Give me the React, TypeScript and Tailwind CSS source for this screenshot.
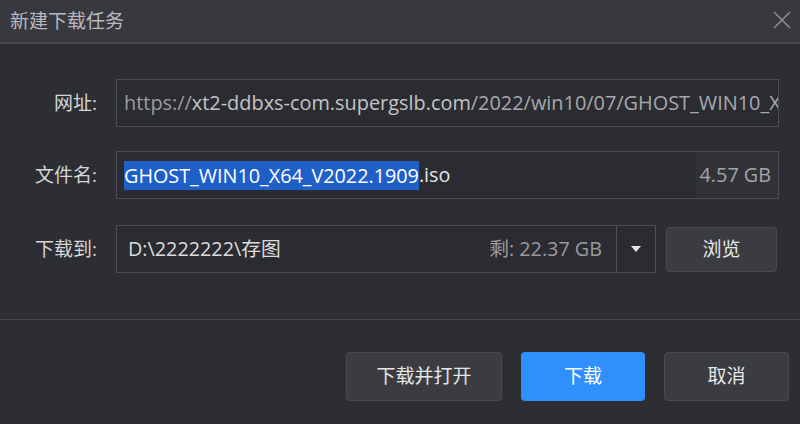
import React from 'react'

const cjk = "font-['Segoe_UI','Open_Sans','Noto_Sans_CJK_SC',sans-serif]"

function Label({ text }: { text: string }) {
  return (
    <div className="w-[97px] shrink-0 text-right text-[19px] text-[#d6d6d8]">{text}</div>
  )
}

export default function App() {
  return (
    <div className={`w-[800px] h-[424px] flex flex-col bg-[#2d2e33] overflow-hidden ${cjk}`}>
      {/* title bar */}
      <div className="h-[44px] shrink-0 flex items-center justify-between bg-[#38393e] border-b-2 border-[#46474c] pl-[10px] pr-[8px]">
        <span className="text-[19px] text-[#b9b8c0]">新建下载任务</span>
        <svg width="20" height="20" viewBox="0 0 20 20" className="mb-[2px]">
          <path d="M2 2 L18 18 M18 2 L2 18" stroke="#8c8c90" strokeWidth="1.6" fill="none" />
        </svg>
      </div>

      {/* form */}
      <div className="flex flex-col gap-[24px] pt-[35px] pb-[46px] border-b border-[#45464b]">
        <div className="flex items-center">
          <Label text="网址:" />
          <div className="ml-[19px] w-[663px] h-[48px] flex items-center border border-[#4c4d52] bg-[#2b2c31] px-[7px] overflow-hidden whitespace-nowrap text-[19.9px]">
            <span className="text-[#9c9ca0]">https://</span>
            <span className="text-[#c4c4c6]">xt2-ddbxs-com.supergslb.com</span>
            <span className="text-[#a8a8ac]">/2022/win10/07/GHOST_WIN10_X64_V2022.1909.iso</span>
          </div>
        </div>

        <div className="flex items-center">
          <Label text="文件名:" />
          <div className="ml-[19px] w-[663px] h-[48px] flex border border-[#4c4d52] bg-[#2b2c31] overflow-hidden whitespace-nowrap text-[19.8px]">
            <div className="flex-1 flex items-center pl-[7px]">
              <span className="bg-[#1f5fc8] text-white leading-[29px]">GHOST_WIN10_X64_V2022.1909</span>
              <span className="text-[#e4e4e6]">.iso</span>
            </div>
            <div className="w-[82px] flex items-center justify-end pr-[7px] bg-[#313237] text-[#a4a4a8]">4.57 GB</div>
          </div>
        </div>

        <div className="flex items-center mt-[2px]">
          <Label text="下载到:" />
          <div className="ml-[19px] w-[540px] h-[48px] flex border border-[#4c4d52] bg-[#2b2c31] whitespace-nowrap text-[19.8px]">
            <div className="flex-1 flex items-center justify-between pl-[11px] pr-[14px]">
              <span className="text-[#dcdcde]">D:\2222222\存图</span>
              <span className="text-[#9a9a9e]">剩: 22.37 GB</span>
            </div>
            <div className="w-[39px] flex items-center justify-center border-l border-[#4c4d52]">
              <svg width="10" height="7" viewBox="0 0 10 7">
                <path d="M0 0 H10 L5 6 Z" fill="#e8e8ea" />
              </svg>
            </div>
          </div>
          <button className="ml-[10px] w-[111px] h-[45px] rounded-[4px] border border-[#4a4b50] bg-[#3b3c41] text-[19px] text-[#e6e6e8]">
            浏览
          </button>
        </div>
      </div>

      {/* footer */}
      <div className="flex-1 flex items-start justify-end gap-[19px] pt-[32px] pr-[11px]">
        <button className="w-[156px] h-[49px] rounded-[4px] border border-[#4a4b50] bg-[#3b3c41] text-[19px] text-[#e6e6e8]">
          下载并打开
        </button>
        <button className="w-[124px] h-[49px] rounded-[4px] bg-[#2f8ffc] text-[19px] text-white">
          下载
        </button>
        <button className="w-[125px] h-[49px] rounded-[4px] border border-[#4a4b50] bg-[#3b3c41] text-[19px] text-[#e6e6e8]">
          取消
        </button>
      </div>
    </div>
  )
}
